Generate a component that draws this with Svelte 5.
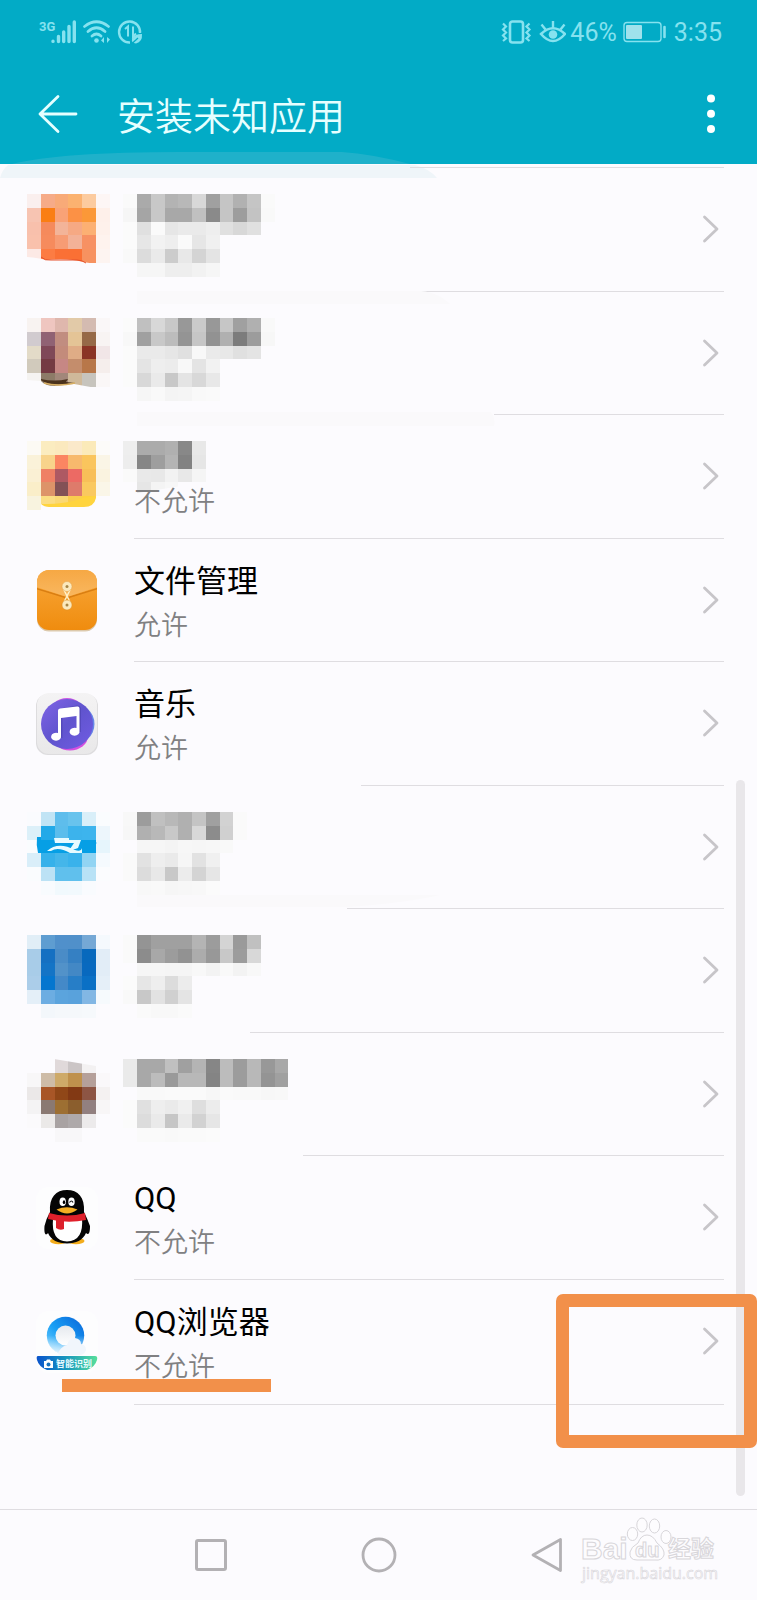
<script>
  const CELL = 13.75;

  // Mosaic rows: space separated colours, "--" leaves a cell clear.
  const apps = [
    {
      lineStart: 410,
      icon: [
        'faefee f6ab88 f8aa78 fbb270 fccb9f fdf6f5',
        'f7c4b2 fa7e14 f9a277 fc9145 fb9838 fef0ea',
        'f8c0ac f58a5c f3b499 f6a984 fcb073 fef1eb',
        'f9c1ac f68b5d f79c74 f3b298 f79163 fef3ee',
        'fce9e5 fc7c43 fa7035 fa7034 f79260 fdf4f1'
      ],
      text: [
        'fa aa c8 b3 b8 d8 a0 c5 b1 c5 fa',
        'f6 a5 c8 a8 a8 c0 8a c5 9d c3 f9',
        'fb e0 fa e6 ea ea ee e0 d8 e0',
        'fb e6 f2 ee fa e6 f0',
        'f9 dc ea cc e8 d4 e4',
        '-- f6 f6 ee ee f2 f6'
      ]
    },
    {
      lineStart: 420,
      smear: 'M137 0H421C433 1 443 6 450 13H137Z',
      icon: [
        'f8f3f1 efc6c0 dfb7ad e2caa8 d4bbb1 faf7f8',
        'd1cbcf 906274 c18d80 e4c496 966947 f8f4f3',
        'e3dbc8 7f4858 c38b7b dfac86 8b3425 f1e6e7',
        'd1cabc 743a43 c68784 c48d6c b87749 f5eeec',
        'f5f3f1 8d7b68 a2877a cfb99a c7c4bd faf7f7'
      ],
      text: [
        'fb c0 d8 c8 98 ca 98 c6 a0 b0 f9',
        'f8 a0 c8 bc 94 c6 92 b0 7c 9c f7',
        'fb ea ea e6 e0 f8 ea e8 e0 e4',
        'fb e4 ee ec f8 e4 f2',
        'fb d8 ea c8 e4 d8 e8',
        '-- f6 f9 f4 f5 f9 fa'
      ]
    },
    {
      lineStart: 494,
      smear: 'M137 -2H491Q496 5 494 12H137Z',
      status: '不允许',
      icon: [
        'fcfaf4 fbecc0 fbe9be fbe9ca fbeab9 fcfbf9',
        'faf2d9 f8d38b fb8562 f7b96d fac55d faf5e6',
        'faf0d4 ef8065 ae5963 ec6a64 f8bf58 faf3e0',
        'faeec9 dd9369 835156 de7b6b fac95f faf6e8',
        'f8f3df fbdd83 fad875 facd4e ffd13d --'
      ],
      text: [
        'ee ab ab b0 88 e8',
        'ed 86 9e b4 82 e6',
        'fa e9 e8 f2 e8 f5',
        '-- e6 f4 f7 -- --'
      ]
    },
    { lineStart: 134, name: '文件管理', status: '允许', art: 'files' },
    { lineStart: 134, name: '音乐', status: '允许', art: 'music' },
    {
      lineStart: 361,
      icon: [
        'fafbfe c1e4f5 5ebdec 68c3ed d9eff9 fafcfe',
        'dcf0f9 22a9e8 5bbdec 3cb3ec 3db4ed edf6fc',
        'fafcfe 069fe5 069fe5 069fe5 069fe5 e6f5fc',
        'd9eef9 36b1ea 44b6ea 39b2eb 91d4f3 f5fafe',
        'fafcfe bce2f5 60c0ed 60c0ed b8e2f6 fbfcfe',
        '-- f8fbfe f1f9fd f2f9fd f9fbfe --'
      ],
      text: [
        'f8 9c c0 b8 b0 c4 a0 d2 fa',
        'f7 b0 b8 c8 b0 d8 8c d0 fa',
        '-- f6 f6 f4 f7 f6 f7 f9',
        'fa e2 ee ea f6 e2 f0',
        'fa dc e8 c8 ec d4 e6',
        '-- f8 f9 f6 f7 f8 fb'
      ]
    },
    {
      lineStart: 347,
      smear: 'M137 -13H440Q405 -5 348 -1H137Z',
      icon: [
        'e1eef7 5e9dd1 5090cb 5090ca 75a8d5 f5f9fd',
        'a8cce8 1570c2 4a8cc7 3580c3 0869bd e2edf7',
        'a8cce8 1474c6 5292c9 4388c5 0869bf e2edf7',
        'abcde9 0576cf 4489c8 277ec7 0a70c5 e5eff8',
        'e4eff8 6cade2 5ba4dd 59a2dc 82b7e4 f6fafd',
        '-- f3f7fb f5f8fb f5f8fb f6f9fc --'
      ],
      text: [
        'fa 94 a0 a0 a0 b4 9c d4 9a c0',
        'fa 8c a8 9c 92 ac 98 c8 9c d8',
        '-- f6 f6 f5 f5 f8 f3 f9 f3 f8',
        'fb e6 ee dc ec',
        'f9 c8 e2 d0 e4',
        '-- fa f8 f8 fa'
      ]
    },
    {
      lineStart: 250,
      icon: [
        '-- -- e0d9da cbc5c6 f3f1f2 --',
        'f8f7f8 cebca7 ceaa69 bf914d b5a09a faf8fa',
        'ebe8e8 a85627 904718 823914 8d5544 f4f1f1',
        'f4f3f4 8a7972 9d6f32 8b5e2d 928080 f8f6f7',
        'fbfafc ebe9e8 a8a2a2 aea9aa eceaeb --',
        '-- -- f8f7f9 f8f7f9 -- --'
      ],
      text: [
        'ea a8 a8 c0 a0 b4 86 bc 9c b8 98 a8',
        'ea a8 bc 9a b8 b8 84 bc 9c b8 94 a0',
        '-- f9 f9 fa fa fa f7 fa f9 f9 f7 f8',
        'fb e0 ee ea f0 de ec',
        'fb dc ea c6 ea d2 e6',
        '-- fa fa f9 fa fa fb'
      ]
    },
    { lineStart: 303, name: 'QQ', status: '不允许', art: 'qq' },
    { lineStart: 134, name: 'QQ浏览器', status: '不允许', art: 'browser', marked: true }
  ];

  function cells(rows, firstCol) {
    const out = [];
    rows.forEach((row, y) => {
      row.split(' ').forEach((value, i) => {
        if (value === '--') return;
        const c = firstCol + i;
        const x0 = Math.round(c * CELL);
        const y0 = Math.round(y * CELL);
        out.push({
          x: x0,
          y: y0,
          w: Math.round((c + 1) * CELL) - x0,
          h: Math.round((y + 1) * CELL) - y0,
          fill: '#' + (value.length === 2 ? value.repeat(3) : value)
        });
      });
    });
    return out;
  }
</script>

<div class="screen">
  <header>
    <div class="status">
      <div class="group">
        <svg width="105" height="28" viewBox="0 0 105 28" fill="none" stroke="#86e2ef">
          <text x="0" y="13" class="net">3G</text>
          <g stroke-width="3.4" stroke-linecap="round">
            <path d="M14 23.300v.1M19.500 18.500v5M24.700 14v9.500M30 8.500v15M35.300 4v19.500" />
          </g>
          <g stroke-width="2.7" stroke-linecap="round">
            <path d="M45.500 8.500Q57.500-1 69.500 8.500M49 13.500Q57.500 6 66 13.500M53 18Q57.500 14 62 18" />
          </g>
          <circle cx="57.500" cy="22.500" r="2.300" fill="#86e2ef" stroke="none" />
          <path d="M65 19v6l-3-2.500zM68 25v-6l3 2.500z" fill="#86e2ef" stroke="none" />
          <path d="M101 15A10.500 10.500 0 1 0 91 24.500" stroke-width="2.400" />
          <path d="M86 11l3-2.500v10M94 8.500v10l3-3" stroke-width="2" />
          <path d="M103 16Q95 16 93 20.500Q92 25 97 25.500Q103.500 24 103 16Z" fill="#86e2ef" stroke="none" />
          <path d="M92 26.500L99 20" stroke="#02abc6" stroke-width="1.200" />
        </svg>
      </div>
      <div class="group right">
        <svg width="65" height="28" viewBox="0 0 65 28" fill="none" stroke="#86e2ef" stroke-width="2.200">
          <rect x="9" y="3.500" width="13" height="21" rx="2.500" stroke-width="2.600" />
          <path d="M2 5.500l3 3-3 3 3 3-3 3 3 3-3 2.500M28.500 5.500l-3 3 3 3-3 3 3 3-3 3 3 2.500" />
          <path d="M40 16Q52 4.500 64 16Q52 30 40 16Z" stroke-width="2.500" />
          <circle cx="52" cy="16.500" r="4.300" fill="#86e2ef" stroke="none" />
          <path d="M52 3v7M40.500 6.500l4 5M63.500 6.500l-4 5" stroke-width="2.400" />
        </svg>
        <span class="percent">46%</span>
        <svg width="44" height="22" viewBox="0 0 44 22" fill="none">
          <rect x="1" y="1.500" width="37" height="19" rx="3" stroke="#86e2ef" stroke-width="1.400" />
          <rect x="3" y="4" width="16" height="14" rx="1" fill="#a0e2ec" />
          <path d="M41.500 6v10" stroke="#86e2ef" stroke-width="2.600" stroke-linecap="round" />
        </svg>
        <span class="time">3:35</span>
      </div>
    </div>
    <div class="bar">
      <button class="plain" aria-label="返回">
        <svg width="40" height="40" viewBox="0 0 40 40" fill="none" stroke="#e6ffff" stroke-width="2.800" stroke-linecap="round" stroke-linejoin="round">
          <path d="M38 20H2M20 2.500L2 20l18 17.500" />
        </svg>
      </button>
      <h1>安装未知应用</h1>
      <button class="plain" aria-label="更多">
        <svg width="10" height="40" viewBox="0 0 10 40" fill="#fff">
          <circle cx="5" cy="4.500" r="4" /><circle cx="5" cy="19.700" r="4" /><circle cx="5" cy="35" r="4" />
        </svg>
      </button>
    </div>
    <svg class="haze" width="440" height="28" viewBox="0 0 440 28">
      <path d="M12 14Q60 2 180 2H342Q372 4 410 14Z" fill="#1fb1ca" />
      <path d="M8 15H415Q430 19 437 28H0Q2 20 8 15Z" fill="#eff5f9" />
    </svg>
  </header>

  <main>
    <ul>
      {#each apps as app}
        <li>
          <div class="line" style:margin-left="{app.lineStart}px"></div>
          {#if app.smear}
            <svg class="smear" width="500" height="14" viewBox="0 0 500 14"><path d={app.smear} fill="#faf9fb" /></svg>
          {/if}
          <a href="#app" aria-label={app.name ?? '应用'}>
            {#if app.icon}
              <svg class="mosaic" width="280" height="83" viewBox="0 0 280 83" shape-rendering="crispEdges">
                {#each cells(app.icon, 0) as c}
                  <rect x={c.x} y={c.y} width={c.w} height={c.h} fill={c.fill} />
                {/each}
                {#each cells(app.text, 7) as c}
                  <rect x={c.x} y={c.y} width={c.w} height={c.h} fill={c.fill} />
                {/each}
                {#if app.lineStart === 410}
                  <g shape-rendering="auto">
                    <path d="M0 63Q12 64 19 66Q42 64 56 68L69 70H0Z" fill="#fcfbfe" />
                    <path d="M14 63Q18 67 24 66H50Q55 66 59 69" fill="none" stroke="#e5502a" />
                  </g>
                {:else if app.lineStart === 420}
                  <g shape-rendering="auto">
                    <path d="M0 62L14 63Q18 68 28 68L47 66L69 70H0Z" fill="#fcfbfe" />
                    <path d="M14 61Q27 64 41 61L39 64L48 65Q22 69 14 62Z" fill="#4b321c" />
                    <path d="M17 65Q30 69 48 65" fill="none" stroke="#d7ae62" stroke-width="1.500" />
                  </g>
                {:else if app.lineStart === 494}
                  <g shape-rendering="auto">
                    <path d="M14 63Q42 63 55 57L69 55V58Q67 66 57 66H22Q17 66 14 63Z" fill="#ffd43e" />
                    <path d="M14 63Q17 66 22 66H57Q67 66 69 57V70H14Z" fill="#fcfbfe" />
                    <path d="M110 52L180 41V56H110Z" fill="#fcfbfe" />
                  </g>
                {:else if app.lineStart === 361}
                  <g shape-rendering="auto">
                    <path d="M14 25H10Q9 33 11 41H14Z" fill="#069fe5" />
                    <path d="M27 26H42V28H54L51 36Q47 38 43 37L47 31H28ZM20 39Q31 29 48 38Q54 40 55 36V41H43Q31 34 24 39Z" fill="#e8fbff" />
                    <path d="M66 29L70 31L66 33Z" fill="#069fe5" />
                  </g>
                {:else if app.lineStart === 250}
                  <path d="M27 0L69 7V-1H27Z" fill="#fcfbfe" shape-rendering="auto" />
                {/if}
              </svg>
            {:else if app.art === 'files'}
              <svg class="icon" width="62" height="62" viewBox="0 0 62 62">
                <defs>
                  <linearGradient id="fa" x2="0" y2="1"><stop stop-color="#f9a83a" /><stop offset="1" stop-color="#ef8b0d" /></linearGradient>
                  <linearGradient id="fb" x2="0" y2="1"><stop stop-color="#f6a844" /><stop offset="1" stop-color="#f9b75f" /></linearGradient>
                  <clipPath id="fc"><rect x="1" y="0" width="60" height="60" rx="12" /></clipPath>
                </defs>
                <rect x="1" y="1" width="60" height="60.500" rx="12" fill="#dcc9ac" />
                <g clip-path="url(#fc)">
                  <rect width="62" height="62" fill="url(#fa)" />
                  <path d="M0 18.500L28 27Q31 28 34 27L62 18.500" fill="none" stroke="#d97e12" stroke-width="1.500" />
                  <path d="M0 0H62V17L34 26Q31 27 28 26L0 17Z" fill="url(#fb)" />
                </g>
                <path d="M28 20L34 32M34 20L28 32" stroke="#fff0c8" stroke-width="1.500" />
                <circle cx="31" cy="16.500" r="5" fill="#fbe9bd" stroke="#e3a048" stroke-width=".5" />
                <circle cx="31" cy="35" r="5" fill="#fbe9bd" stroke="#d98c25" stroke-width=".5" />
                <circle cx="31" cy="16.500" r="1.500" fill="#a78646" /><circle cx="31" cy="35" r="1.500" fill="#a78646" />
              </svg>
            {:else if app.art === 'music'}
              <svg class="icon" width="62" height="62" viewBox="0 0 62 62">
                <defs>
                  <linearGradient id="ma" x2="0" y2="1"><stop stop-color="#f4f3f4" /><stop offset="1" stop-color="#e9e8e9" /></linearGradient>
                  <linearGradient id="mb" x2="1" y2="1"><stop stop-color="#8064e6" /><stop offset=".5" stop-color="#6054ce" /><stop offset="1" stop-color="#715ce4" /></linearGradient>
                </defs>
                <rect x="0" y="1" width="62" height="61" rx="12" fill="#dddcde" />
                <rect x="1" y="0" width="60" height="61" rx="12" fill="url(#ma)" />
                <ellipse cx="34" cy="43" rx="18" ry="14.500" fill="#d64fe0" />
                <ellipse cx="31" cy="22" rx="18" ry="17" fill="#cc58e5" />
                <ellipse cx="34" cy="31" rx="24.500" ry="22" fill="#6686e8" />
                <ellipse cx="31" cy="31" rx="26" ry="25" fill="url(#mb)" />
                <path d="M25 45V19Q25 17 27 16.500L41 14Q43.500 14 43.500 16V39" fill="none" stroke="#423aa2" stroke-opacity=".45" stroke-width="3" />
                <path d="M22 17.500Q22 16 24 15.500L41 13.500Q43.500 13 43.500 15.500V38A5 4 0 1 1 40.500 35V23L25 25V43A5 4 0 1 1 22 40Z" fill="#fff" />
              </svg>
            {:else if app.art === 'qq'}
              <svg class="icon" width="62" height="62" viewBox="0 0 62 62">
                <rect width="62" height="62" rx="12" fill="#fdfdfe" />
                <ellipse cx="22.500" cy="54" rx="8.500" ry="3.200" fill="#f3ad1c" />
                <ellipse cx="40" cy="54" rx="8.500" ry="3.200" fill="#f3ad1c" />
                <path d="M14 25C13 10 20 3 31 3S49 10 48 25Q51 31 54 39C54 45 53 49 50 46C47 53 40 56.500 31 56.500S15 53 12 46C9 50 8 45 8.500 39Q10 32 14 25Z" fill="#050505" />
                <path d="M17 32Q15 54 31 54.500Q48 54 46 31Q31 36 17 32Z" fill="#fff" />
                <path d="M13 26Q31 31 49 26L50 33Q31 37 12 32Z" fill="#e0202b" />
                <path d="M20 33H28V42Q24 44 20 41Z" fill="#dc202b" />
                <ellipse cx="26.700" cy="14.700" rx="3.200" ry="4.300" fill="#fff" />
                <ellipse cx="35.500" cy="14.700" rx="3.200" ry="4.300" fill="#fff" />
                <ellipse cx="28" cy="15.200" rx="1.200" ry="1.900" />
                <path d="M33.500 15.500Q35.500 12.500 37 15.500" fill="none" stroke="#111" stroke-width="1.200" />
                <path d="M20.500 22.500Q31 18 41.500 22.500Q36 26.500 31 26.500T20.500 22.500Z" fill="#f5ad22" />
              </svg>
            {:else}
              <svg class="icon" width="62" height="62" viewBox="0 0 62 62">
                <defs>
                  <linearGradient id="ba" x1="0" y1="1" x2="1" y2="0"><stop stop-color="#7fd4ff" /><stop offset=".45" stop-color="#1aa0f5" /><stop offset="1" stop-color="#0864d8" /></linearGradient>
                  <linearGradient id="bb" x2="1" y2="0"><stop stop-color="#0b53cc" /><stop offset=".5" stop-color="#1899bd" /><stop offset="1" stop-color="#57df9b" /></linearGradient>
                  <linearGradient id="bc" x2="0" y2="1"><stop stop-color="#e5e9ee" /><stop offset="1" stop-color="#ffffff" /></linearGradient>
                  <linearGradient id="bd" x2="0" y2="1"><stop offset=".5" stop-color="#fff" stop-opacity="0" /><stop offset="1" stop-color="#fff" stop-opacity=".9" /></linearGradient>
                </defs>
                <rect width="62" height="62" rx="12" fill="#fdfdfe" />
                <circle cx="29.500" cy="24.500" r="18.700" fill="url(#ba)" />
                <circle cx="29.500" cy="24.500" r="19" fill="url(#bd)" />
                <circle cx="29.500" cy="24.500" r="10" fill="url(#bc)" />
                <path d="M22 43Q24 36 31 34Q33 27 39 27Q45 28 45 33Q50 34 50 39Q49 43 45 44H24Z" fill="#f1f6fc" />
                <path d="M2 45H59Q62 45 61 49Q59 56 51 59H11Q3 56 1 49Q0 45 2 45Z" fill="url(#bb)" />
                <path d="M8 50h2l1-1.500h3L15 50h2v7H8Z" fill="#fff" /><circle cx="12.500" cy="53.500" r="2" fill="#1670bd" />
                <text x="20" y="56" class="badge">智能识别</text>
              </svg>
            {/if}
            <span class="copy">
              <span class="name">{app.name ?? ''}</span>
              <span class="state">{app.status ?? ''}</span>
            </span>
            <svg class="chevron" width="17" height="28" viewBox="0 0 17 28" fill="none" stroke="#c7c5c9" stroke-width="2.800" stroke-linecap="round" stroke-linejoin="round">
              <path d="M2.500 2L15 14L2.500 26" />
            </svg>
          </a>
          {#if app.marked}
            <div class="underline"></div>
            <div class="frame"></div>
          {/if}
        </li>
      {/each}
    </ul>
    <div class="line last"></div>
    <div class="scroll"></div>
  </main>

  <nav>
    <button aria-label="最近任务">
      <svg width="36" height="36" viewBox="0 0 36 36" fill="none" stroke="#b3b1b4" stroke-width="3"><rect x="3.500" y="3.500" width="29" height="29" rx="1.500" /></svg>
    </button>
    <button aria-label="主屏幕">
      <svg width="36" height="36" viewBox="0 0 36 36" fill="none" stroke="#b3b1b4" stroke-width="2.800"><circle cx="18" cy="18" r="16" /></svg>
    </button>
    <button aria-label="返回">
      <svg width="36" height="36" viewBox="0 0 36 36" fill="none" stroke="#b3b1b4" stroke-width="2.800" stroke-linejoin="round"><path d="M31.500 2.500V33.500L4 18Z" /></svg>
    </button>
    <svg class="mark" width="140" height="70" viewBox="0 0 140 70" fill="#fdfcfe" stroke="#d8d6da">
      <text x="3" y="42" class="bai">Bai</text>
      <path d="M52 35Q53 30 60 26Q63 18 69 18Q75 18 79 26Q87 32 86 38Q84 44 77 43H59Q51 43 52 35Z" />
      <ellipse cx="54.500" cy="17" rx="5.200" ry="6.500" /><ellipse cx="64" cy="8" rx="5.200" ry="7" />
      <ellipse cx="76.500" cy="9" rx="5.200" ry="7" /><ellipse cx="88" cy="20" rx="5" ry="6.500" />
      <text x="57" y="40" class="du">du</text>
      <text x="90" y="40" class="exp">经验</text>
      <text x="4" y="62" class="site">jingyan.baidu.com</text>
    </svg>
  </nav>
</div>

<style>
  :global(body) {
    margin: 0;
    background: #fcfbfe;
  }
  .screen {
    min-height: 100vh;
    display: flex;
    flex-direction: column;
    background: #fcfbfe;
    font-family: Roboto, 'Noto Sans CJK SC', sans-serif;
    overflow: hidden;
  }
  svg {
    display: block;
    flex: none;
  }
  header {
    position: relative;
    background: #02abc6;
  }
  .status {
    height: 64px;
    display: flex;
    align-items: center;
    justify-content: space-between;
    padding: 0 35px 0 39px;
    color: #86e2ef;
    font-size: 25px;
  }
  .group {
    display: flex;
    align-items: center;
  }
  .percent {
    margin: 1px 6px 0 4px;
  }
  .time {
    margin: 1px 0 0 7px;
  }
  .net {
    font: bold 13px 'Liberation Sans Narrow', Roboto, sans-serif;
    fill: #86e2ef;
    stroke: none;
  }
  .bar {
    height: 100px;
    display: flex;
    align-items: center;
    padding: 0 41px 0 38px;
  }
  .plain {
    border: 0;
    padding: 0;
    background: none;
  }
  h1 {
    flex: 1;
    margin: 6px 0 0 39px;
    color: #e6ffff;
    font-size: 38px;
    line-height: 54px;
    font-weight: 350;
  }
  .haze {
    position: absolute;
    left: 0;
    bottom: -14px;
  }
  main {
    position: relative;
    flex: 1;
    display: flex;
    flex-direction: column;
    padding: 3px 0 104px;
  }
  ul {
    flex: 1;
    display: grid;
    grid-auto-rows: 1fr;
    margin: 0 0 2px;
    padding: 0;
    list-style: none;
  }
  li {
    position: relative;
    min-height: 112px;
    display: flex;
    flex-direction: column;
  }
  .line {
    height: 1px;
    margin-right: 33px;
    background: #dfdde1;
  }
  .last {
    margin-left: 134px;
  }
  .smear {
    position: absolute;
    top: 0;
    left: 0;
    overflow: visible;
  }
  a {
    flex: 1;
    display: grid;
    grid-template-columns: 107px 1fr 17px;
    align-items: start;
    padding: 0 38px 0 27px;
    color: #000;
    text-decoration: none;
  }
  .mosaic {
    grid-area: 1 / 1 / 2 / 3;
    margin-top: 26px;
  }
  .icon {
    grid-area: 1 / 1 / 2 / 2;
    margin: 31px 0 0 9px;
  }
  .badge {
    font: bold 9px 'Noto Sans CJK SC', sans-serif;
    fill: #e8fbff;
    stroke: none;
  }
  .copy {
    grid-area: 1 / 2 / 2 / 3;
    display: grid;
    grid-template-rows: 40px 36px;
    row-gap: 6px;
    padding-top: 23px;
  }
  .name {
    font-size: 31px;
    line-height: 40px;
  }
  .state {
    color: #808082;
    font-size: 27px;
    line-height: 36px;
    font-weight: 350;
  }
  .chevron {
    grid-area: 1 / 3 / 2 / 4;
    align-self: center;
  }
  .underline {
    position: absolute;
    left: 62px;
    top: 100px;
    width: 209px;
    height: 13px;
    background: #f2904a;
  }
  .frame {
    position: absolute;
    z-index: 1;
    right: 0;
    top: 15px;
    width: 201px;
    height: 154px;
    box-sizing: border-box;
    border: 13px solid #f2904a;
    border-radius: 7px;
  }
  .scroll {
    position: absolute;
    right: 12px;
    top: 616px;
    bottom: 13px;
    width: 9px;
    border-radius: 5px;
    background: #e9e7ea;
  }
  nav {
    position: relative;
    height: 90px;
    display: flex;
    justify-content: center;
    border-top: 1px solid #dfdde1;
  }
  nav button {
    width: 168px;
    border: 0;
    padding: 0;
    background: none;
    display: grid;
    place-items: center;
  }
  .mark {
    position: absolute;
    right: 39px;
    top: 7px;
  }
  .bai {
    font: bold 30px 'Liberation Sans', sans-serif;
  }
  .du {
    font: bold 20px 'Liberation Sans', sans-serif;
  }
  .exp {
    font: bold 23px 'Noto Sans CJK SC', sans-serif;
  }
  .site {
    font: 16px 'Open Sans', sans-serif;
    stroke-width: 0.6px;
  }
</style>
